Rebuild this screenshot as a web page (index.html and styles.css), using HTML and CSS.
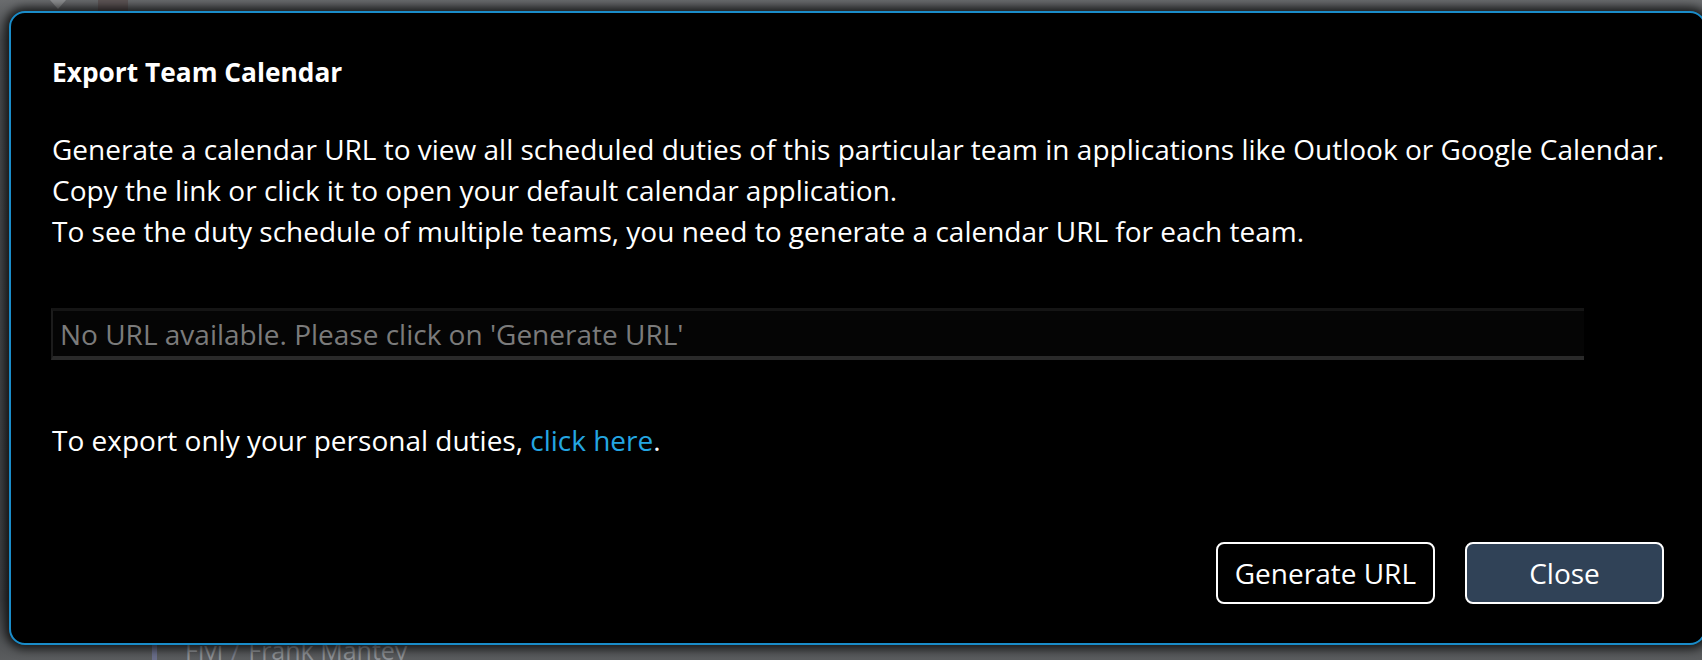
FILE: index.html
```html
<!DOCTYPE html>
<html lang="en">
<head>
<meta charset="utf-8">
<title>Export Team Calendar</title>
<link rel="stylesheet" href="styles.css">
</head>
<body>
<div class="backdrop">
  <div class="bg-top">
    <span class="bg-caret"></span>
    <span class="bg-block"></span>
  </div>
  <div class="bg-bottom">
    <span class="bg-mark"></span>
    <span class="bg-name">Fiyi</span>
    <span class="bg-sep">/</span>
    <span class="bg-name">Frank Mantey</span>
  </div>
</div>

<div class="modal" role="dialog" aria-labelledby="dlg-title">
  <h2 class="modal-title" id="dlg-title">Export Team Calendar</h2>
  <p class="modal-text">
    Generate a calendar URL to view all scheduled duties of this particular team in applications like Outlook or Google Calendar.<br>
    Copy the link or click it to open your default calendar application.<br>
    To see the duty schedule of multiple teams, you need to generate a calendar URL for each team.
  </p>
  <input class="url-field" type="text" readonly placeholder="No URL available. Please click on 'Generate URL'">
  <p class="modal-text personal">To export only your personal duties, <a class="link" href="#">click here</a>.</p>
  <div class="actions">
    <button class="btn btn-outline" type="button">Generate URL</button>
    <button class="btn btn-primary" type="button">Close</button>
  </div>
</div>
</body>
</html>
```
FILE: styles.css
```css
* { box-sizing: border-box; }

html, body {
  margin: 0;
  width: 1702px;
  height: 660px;
  overflow: hidden;
}

body {
  position: relative;
  background: linear-gradient(#6a6c6e 0px, #4a4d50 40px, #3e4144 600px, #5a5c5e 660px);
  font-family: "Open Sans", "Noto Sans", sans-serif;
  color: #ffffff;
}

.backdrop {
  height: 660px;
  display: flex;
  flex-direction: column;
  justify-content: space-between;
}

.bg-top {
  display: flex;
  align-items: flex-start;
  height: 14px;
  padding-left: 50px;
  gap: 32px;
}

.bg-caret {
  width: 0;
  height: 0;
  border-left: 8px solid transparent;
  border-right: 8px solid transparent;
  border-top: 9px solid #8e9092;
}

.bg-block {
  width: 30px;
  height: 14px;
  background: #5e5556;
}

.bg-bottom {
  display: flex;
  align-items: flex-end;
  height: 22px;
  padding-left: 152px;
  gap: 8px;
  font-size: 25px;
  line-height: 25px;
  color: #8d9094;
  margin-bottom: -3px;
}

.bg-mark {
  width: 5px;
  height: 18px;
  background: #6a6e8a;
  margin-right: 20px;
}

.bg-sep { color: #7a7e8a; }

.modal {
  position: absolute;
  top: 11px;
  left: 9px;
  right: -4px;
  bottom: 15px;
  background: #000000;
  border: 2px solid #1a8cc9;
  border-radius: 16px;
  box-shadow: 0 0 10px 4px rgba(0, 0, 0, 0.75);
  padding: 41px 40px 39px 41px;
  display: flex;
  flex-direction: column;
  align-items: flex-start;
}

.modal-title {
  margin: 0;
  font-size: 26.3px;
  font-weight: 700;
  line-height: 37px;
}

.modal-text {
  margin: 38px 0 0;
  font-size: 28px;
  line-height: 41px;
  white-space: nowrap;
}

.url-field {
  margin: 56px 0 0 -1px;
  width: 1533px;
  height: 52px;
  background: #050505;
  border: 0;
  border-top: 3px solid #151515;
  border-left: 2px solid #1c1c1c;
  border-bottom: 4px solid #2a2a2a;
  padding: 0 0 0 7px;
  font-family: inherit;
  font-size: 28px;
  color: #cfcfcf;
  outline: none;
}

.url-field::placeholder { color: #7b7b7b; }

.personal { margin-top: 60px; }

.link {
  color: #24a6e2;
  text-decoration: none;
}

.actions {
  margin-top: auto;
  align-self: stretch;
  display: flex;
  justify-content: flex-end;
  gap: 30px;
}

.btn {
  height: 62px;
  min-width: 199px;
  padding: 0 17px;
  border: 2px solid #ffffff;
  border-radius: 8px;
  font-family: inherit;
  font-size: 28px;
  color: #ffffff;
  cursor: pointer;
}

.btn-outline { background: #000000; }
.btn-primary { background: #304257; }
```
